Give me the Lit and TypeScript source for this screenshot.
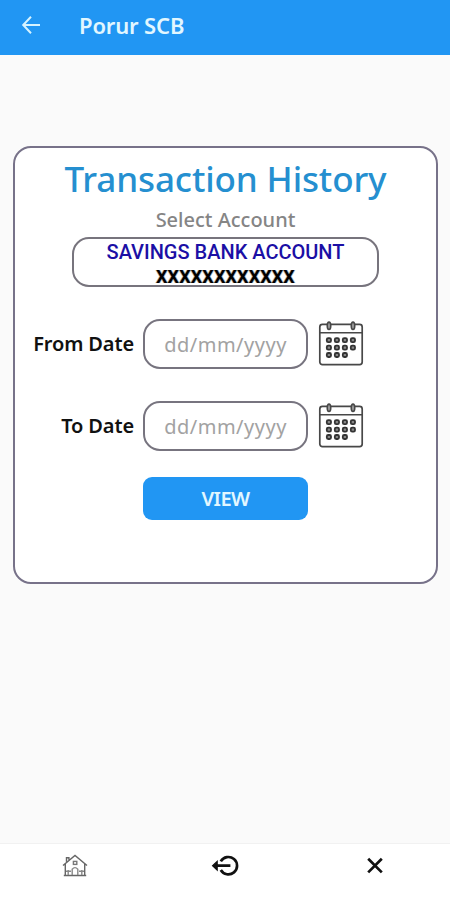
import { LitElement, html, css, svg } from "lit";
import { customElement, property } from "lit/decorators.js";

@customElement("calendar-icon")
class CalendarIcon extends LitElement {
  static styles = css`
    :host { display: block; width: 46px; height: 46px; }
    svg { display: block; }
  `;
  render() {
    const cells: [number, number][] = [];
    for (let r = 0; r < 3; r++)
      for (let c = 0; c < (r === 2 ? 3 : 4); c++) cells.push([8.8 + c * 8, 18.2 + r * 7.4]);
    return html`<svg width="46" height="46" viewBox="0 0 46 46" fill="none" stroke="#484848">
      <rect x="1.8" y="4.4" width="42.4" height="40.2" rx="2.6" stroke-width="1.7" />
      <path d="M2 12.8H44" stroke-width="1.6" />
      <ellipse cx="11" cy="5.8" rx="1.7" ry="3.7" fill="#aaa" stroke-width="1.7" />
      <ellipse cx="35" cy="5.8" rx="1.7" ry="3.7" fill="#aaa" stroke-width="1.7" />
      ${cells.map(([x, y]) => svg`<rect x=${x} y=${y} width="4.2" height="4" rx="1.4" fill="#888" stroke="#333" stroke-width="1.8" />`)}
    </svg>`;
  }
}

@customElement("date-row")
class DateRow extends LitElement {
  @property() label = "";
  static styles = css`
    :host { display: grid; grid-template-columns: 120px 165px 56px; height: 50px; align-items: center; }
    .label { text-align: right; padding: 0 9px 1px 0; font-weight: 600; font-size: 20px; letter-spacing: -0.12px; color: #111; white-space: nowrap; }
    .field { box-sizing: border-box; height: 50px; border: 2px solid #77747f; border-radius: 17px; display: flex; align-items: center; justify-content: center; font-size: 20px; letter-spacing: 0.5px; color: #a2a2a2; background: #fff; }
    calendar-icon { margin: -3px 0 0 10px; }
  `;
  render() {
    return html`<div class="label">${this.label}</div>
      <div class="field">dd/mm/yyyy</div>
      <calendar-icon></calendar-icon>`;
  }
}

@customElement("app-root")
class AppRoot extends LitElement {
  static styles = css`
    :host { display: flex; flex-direction: column; height: 900px; width: 450px; background: #fafafa; font-family: "Noto Sans", "Open Sans", sans-serif; overflow: hidden; }
    * { box-sizing: border-box; }
    header { height: 55px; background: #2196f3; display: flex; align-items: center; padding: 0 0 5px 21px; color: #e2f7ff; flex: none; }
    .bar-title { margin-left: 38px; font-size: 22px; font-weight: 600; letter-spacing: -0.15px; white-space: nowrap; }
    main { flex: 1; padding: 91px 12px 0 13px; }
    .card { height: 438px; border: 2px solid #777289; border-radius: 18px; background: #fff; display: flex; flex-direction: column; align-items: center; }
    h1 { margin: 10px 0 0; height: 42px; line-height: 42px; font-size: 35px; font-weight: 500; letter-spacing: -0.12px; color: #258fd0; white-space: nowrap; }
    .hint { margin-top: 6px; height: 28px; line-height: 28px; font-size: 20px; font-weight: 500; color: #858585; white-space: nowrap; }
    .account { margin-top: 3px; width: 307px; height: 50px; border: 2px solid #77747d; border-radius: 17px; display: flex; flex-direction: column; align-items: center; font-family: Roboto, sans-serif; white-space: nowrap; }
    .name { margin-top: 1px; height: 24px; line-height: 24px; font-size: 20px; font-weight: 500; color: #1b0fa5; }
    .number { height: 21px; line-height: 26px; font-size: 18px; font-weight: 700; letter-spacing: 0.15px; color: #000; text-shadow: 1px 0 #0004, -1px 0 #0004; }
    .rows { align-self: stretch; padding-left: 8px; margin-top: 32px; display: grid; gap: 32px; }
    .view { margin-top: 26px; width: 165px; height: 43px; border-radius: 9px; background: #2196f3; color: #e2f7ff; display: flex; align-items: center; justify-content: center; font-size: 20px; font-weight: 600; letter-spacing: -0.5px; }
    nav { height: 57px; flex: none; border-top: 1px solid #f1f1f1; background: #fff; display: grid; grid-template-columns: repeat(3, 1fr); justify-items: center; padding-top: 8px; }
    svg { display: block; }
  `;
  render() {
    return html`
      <header>
        <svg width="20" height="20" viewBox="0 0 20 20" fill="none" stroke="#d6f3ff" stroke-width="2"><path d="M19 10H2.5M10 1.8L2.2 10l7.8 8.2" /></svg>
        <span class="bar-title">Porur SCB</span>
      </header>
      <main>
        <section class="card">
          <h1>Transaction History</h1>
          <div class="hint">Select Account</div>
          <div class="account">
            <div class="name">SAVINGS BANK ACCOUNT</div>
            <div class="number">XXXXXXXXXXXX</div>
          </div>
          <div class="rows">
            <date-row label="From Date"></date-row>
            <date-row label="To Date"></date-row>
          </div>
          <div class="view">VIEW</div>
        </section>
      </main>
      <nav>
        <svg width="28" height="28" viewBox="0 0 28 28" fill="none" stroke="#666" stroke-width="1.4">
          <path d="M2 13.5L14 3.5l12 10M4.3 12v11.5M23.7 12v11.5M2.8 23.5h22.4M5.5 9.8V5.7h2.4v2" />
          <path d="M11.2 23V17.3q2.8-3.4 5.6 0V23M5 19.3h5M18 19.3h5M7.2 18v5M20.8 18v5" stroke="#888" />
          <rect x="12.4" y="9.4" width="3.4" height="3" stroke="#777" />
        </svg>
        <svg width="30" height="28" viewBox="0 0 30 28" fill="none" stroke="#111" stroke-width="2.7">
          <path d="M10.8 9.4A8.7 8.7 0 1 1 10.8 18M5 13.7H20.4" />
          <path d="M2.6 13.7L7.2 9.4V18Z" fill="#111" stroke-width="1.2" />
        </svg>
        <svg width="28" height="28" viewBox="0 0 28 28" fill="none" stroke="#111" stroke-width="2.7"><path d="M7.2 6.8L20.8 20.4M20.8 6.8L7.2 20.4" /></svg>
      </nav>`;
  }
}
